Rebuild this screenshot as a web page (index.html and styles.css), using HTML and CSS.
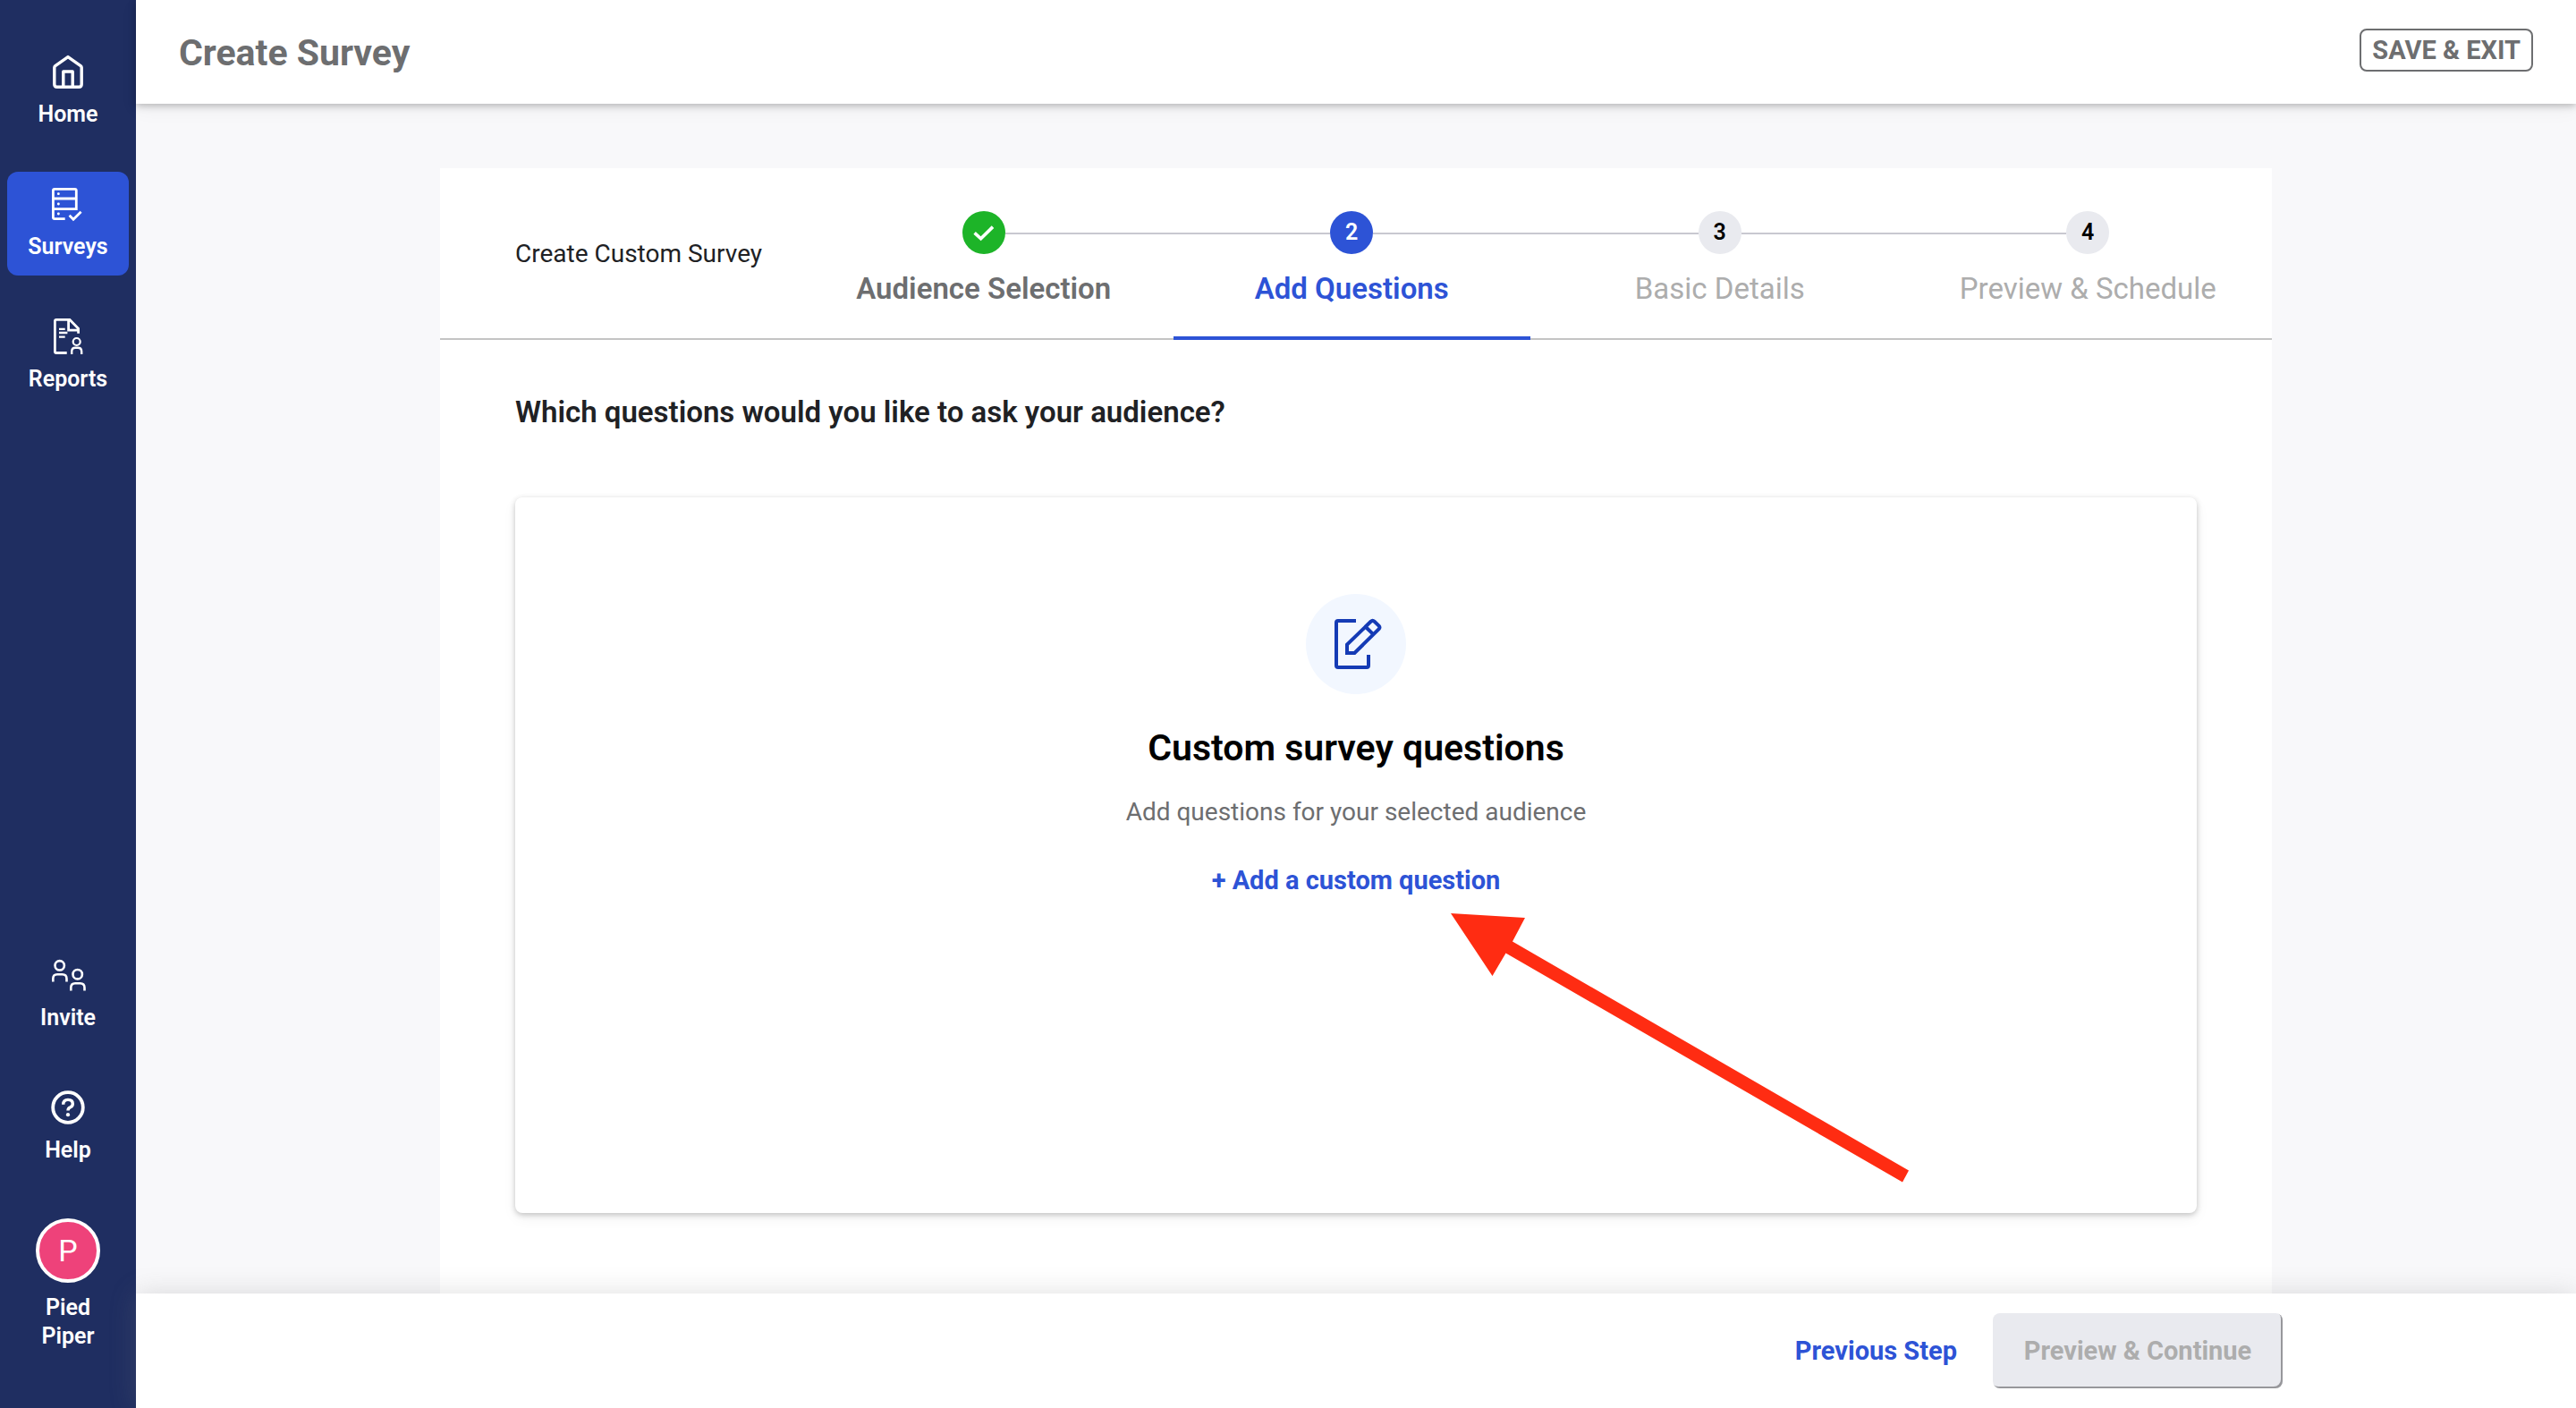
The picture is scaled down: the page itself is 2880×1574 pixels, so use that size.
FILE: index.html
```html
<!DOCTYPE html>
<html lang="en">
<head>
<meta charset="utf-8">
<meta name="viewport" content="width=device-width, initial-scale=1">
<title>Create Survey</title>
<link rel="stylesheet" href="styles.css">
</head>
<body>
<div class="app">
  <nav class="sidebar" aria-label="Main">
    <div class="nav-group">
      <a class="nav-item" href="#home">
        <svg class="nav-icon" viewBox="0 0 48 48" stroke-width="3.4" stroke-linejoin="round" aria-hidden="true"><path d="M24 7.6 38.2 17.6Q39.2 18.4 39.2 19.6V38.2Q39.2 41.2 36.2 41.2H11.8Q8.8 41.2 8.8 38.2V19.6Q8.8 18.4 9.8 17.6Z"/><path d="M18.8 41V24H29.2V41"/></svg>
        <span>Home</span>
      </a>
      <a class="nav-item nav-item-active" href="#surveys" aria-current="page">
        <svg class="nav-icon" viewBox="0 0 48 48" stroke-width="2.8" aria-hidden="true"><path d="M20.7 40.6H9Q7.4 40.6 7.4 39V9Q7.4 7.4 9 7.4H31.7Q33.3 7.4 33.3 9V29.7H7.4M7.4 18H33.3M25.6 36.8 30 41.2 38.6 32.8"/><path stroke-linecap="round" d="M13.3 12.7h.1M13.3 24h.1M13.3 35h.1"/></svg>
        <span>Surveys</span>
      </a>
      <a class="nav-item" href="#reports">
        <svg class="nav-icon" viewBox="0 0 48 48" stroke-width="2.8" aria-hidden="true"><path d="M22.7 42.5H11Q9.4 42.5 9.4 41V7Q9.4 5.4 11 5.4H26L35.6 15.2V20.8M24.6 5.4V17.1H35.6"/><path stroke-width="2.3" d="M14 15.8H20.7M14 20H23.4M14 24.6H20.7"/><circle cx="33.7" cy="30" r="4" stroke-width="2.2"/><path stroke-width="2.4" d="M28.2 44V41Q28.2 36.8 32.2 36.8H35Q39.2 36.8 39.2 41V44"/></svg>
        <span>Reports</span>
      </a>
    </div>
    <div class="nav-group">
      <a class="nav-item" href="#invite">
        <svg class="nav-icon" viewBox="0 0 48 48" stroke-width="2.6" aria-hidden="true"><circle cx="14.7" cy="13.3" r="5.2"/><path d="M7.3 31.6V28Q7.3 23.3 12 23.3H17.6Q22.5 23.3 22.5 28V31.6"/><circle cx="34.7" cy="23.2" r="5.2"/><path d="M27.3 41.6V38Q27.3 33.2 32 33.2H37.6Q42.5 33.2 42.5 38V41.6"/></svg>
        <span>Invite</span>
      </a>
      <a class="nav-item" href="#help">
        <svg class="nav-icon" viewBox="0 0 48 48" stroke-width="3.8" aria-hidden="true"><circle cx="24" cy="24" r="16.8"/><path stroke-width="3.4" d="M18.7 20.8Q18.7 15.4 24 15.4 29.3 15.4 29.3 20 29.3 22.6 26.6 23.8 24 24.8 24 27.6"/><circle class="dot" cx="24" cy="32.2" r="2.1"/></svg>
        <span>Help</span>
      </a>
      <a class="account" href="#account">
        <span class="avatar" aria-hidden="true">P</span>
        <span>Pied Piper</span>
      </a>
    </div>
  </nav>

  <div class="page">
    <header class="topbar">
      <h1 class="topbar-title">Create Survey</h1>
      <button class="save-button" type="button">SAVE &amp; EXIT</button>
    </header>

    <main class="content">
      <div class="panel">
        <div class="panel-head">
          <p class="survey-type">Create Custom Survey</p>
          <ol class="steps">
            <li class="step step-done">
              <div class="step-track"><span class="step-dot"><svg viewBox="0 0 48 48" aria-label="Done"><path d="M13.6 24.4 20.6 30.8 34 17.6"/></svg></span></div>
              <span class="step-label">Audience Selection</span>
            </li>
            <li class="step step-active" aria-current="step">
              <div class="step-track"><span class="step-dot">2</span></div>
              <span class="step-label">Add Questions</span>
            </li>
            <li class="step">
              <div class="step-track"><span class="step-dot">3</span></div>
              <span class="step-label">Basic Details</span>
            </li>
            <li class="step">
              <div class="step-track"><span class="step-dot">4</span></div>
              <span class="step-label">Preview &amp; Schedule</span>
            </li>
          </ol>
        </div>
        <section class="panel-body">
          <h2 class="question">Which questions would you like to ask your audience?</h2>
          <div class="card">
            <svg class="card-icon" viewBox="0 0 112 112" aria-hidden="true"><circle cx="56" cy="56" r="56"/><path d="M56 30H36Q34 30 34 32V80Q34 82 36 82H68Q70 82 70 80V68"/><path d="M46 66V56.6L72.6 30.8Q74.6 29 76.6 30.8L81.6 35.6Q83.2 37.4 81.6 39.2L54.4 66ZM67 37 75.6 45.4"/></svg>
            <h3 class="card-title">Custom survey questions</h3>
            <p class="card-text">Add questions for your selected audience</p>
            <button class="link-button" type="button">+ Add a custom question</button>
            <svg class="pointer" viewBox="0 0 514 302" aria-hidden="true"><path d="M0 0 83 5 69 31.5 512 287.5 505 300.5 61.5 44.5 46.5 70Z"/></svg>
          </div>
        </section>
      </div>
    </main>

    <footer class="footer">
      <div class="footer-actions">
        <button class="link-button" type="button">Previous Step</button>
        <button class="next-button" type="button" disabled>Preview &amp; Continue</button>
      </div>
    </footer>
  </div>
</div>
</body>
</html>
```
FILE: styles.css
```css
* {
  box-sizing: border-box;
}

body {
  margin: 0;
  background: #f8f8fa;
  color: #202124;
  font-family: Roboto, "Liberation Sans", sans-serif;
  font-size: 28px;
  line-height: 40px;
}

h1, h2, h3, p, ol {
  margin: 0;
  padding: 0;
}

button {
  font: inherit;
  font-size: 29px;
  font-weight: 700;
  cursor: pointer;
}

.app {
  display: flex;
  min-height: 100vh;
}

/* Sidebar */
.sidebar {
  position: sticky;
  top: 0;
  display: flex;
  flex: 0 0 152px;
  flex-direction: column;
  justify-content: space-between;
  height: 100vh;
  padding: 44px 8px;
  background: #1f2e61;
  font-size: 25px;
  font-weight: 600;
  line-height: 32px;
  text-align: center;
}

.nav-group {
  display: flex;
  flex-direction: column;
  gap: 32px;
}

.nav-item,
.account {
  display: flex;
  flex-direction: column;
  align-items: center;
  gap: 8px;
  color: #fff;
  text-decoration: none;
}

.nav-item {
  padding: 12px 0 16px;
  border-radius: 12px;
}

.nav-item-active {
  background: #2d53d6;
}

.nav-icon {
  width: 48px;
  height: 48px;
  fill: none;
  stroke: #fff;
}

.nav-icon .dot {
  fill: #fff;
  stroke: none;
}

.account {
  gap: 12px;
  padding: 12px 24px 20px;
}

.avatar {
  width: 72px;
  height: 72px;
  border: 4px solid #fff;
  border-radius: 50%;
  background: #ee427a;
  font-size: 34px;
  font-weight: 400;
  line-height: 64px;
}

/* Page frame */
.page {
  display: flex;
  flex: 1;
  flex-direction: column;
  min-width: 0;
}

.topbar {
  position: relative;
  display: flex;
  align-items: flex-start;
  justify-content: space-between;
  padding: 32px 48px 30px;
  background: #fff;
  box-shadow: 0 2px 8px rgba(0, 0, 0, 0.26), 0 6px 20px rgba(0, 0, 0, 0.05);
}

.topbar-title {
  color: #6d6e70;
  font-size: 41px;
  line-height: 54px;
}

.save-button {
  height: 48px;
  padding: 0 12px;
  border: 2px solid #6d6e70;
  border-radius: 8px;
  background: #fff;
  color: #6d6e70;
  line-height: 44px;
}

.content {
  display: flex;
  flex: 1;
  justify-content: center;
  padding: 72px 48px 0;
}

.panel {
  flex: 0 1 2048px;
  background: #fff;
}

/* Steps */
.panel-head {
  display: flex;
  align-items: center;
  border-bottom: 2px solid #c4c4c4;
}

.survey-type {
  flex: 0 0 402px;
  padding: 2px 0 0 84px;
  white-space: nowrap;
}

.steps {
  display: grid;
  flex: 1;
  grid-template-columns: repeat(4, 1fr);
  margin-bottom: -2px;
  list-style: none;
}

.step {
  display: flex;
  flex-direction: column;
  padding-top: 48px;
  color: #adadad;
  font-size: 33px;
  text-align: center;
}

.step::after {
  height: 4px;
  margin: 33px 6px 0;
  content: "";
}

.step-track {
  display: flex;
  align-items: center;
  margin-bottom: 19px;
}

.step-track::before,
.step-track::after {
  flex: 1;
  height: 2px;
  margin-top: 2px;
  background: #c8c8d0;
  content: "";
}

.step:first-child .step-track::before,
.step:last-child .step-track::after {
  visibility: hidden;
}

.step-dot {
  width: 48px;
  height: 48px;
  border-radius: 50%;
  background: #e9eaef;
  color: #000;
  font-size: 25px;
  font-weight: 600;
  line-height: 48px;
}

.step-dot svg {
  display: block;
  fill: none;
  stroke: #fff;
  stroke-width: 3.6;
}

.step-done {
  color: #6d6e70;
  font-weight: 600;
}

.step-done .step-dot {
  background: #1db428;
}

.step-active {
  color: #2d53d6;
  font-weight: 600;
}

.step-active .step-dot {
  background: #2d53d6;
  color: #fff;
}

.step-active::after {
  background: #2d53d6;
}

/* Panel body */
.panel-body {
  padding: 61px 84px 90px;
}

.question {
  margin-bottom: 75px;
  font-size: 33px;
  font-weight: 600;
}

.card {
  position: relative;
  display: flex;
  flex-direction: column;
  align-items: center;
  min-height: 800px;
  padding: 108px 24px;
  border-radius: 8px;
  background: #fff;
  box-shadow: 0 2px 6px rgba(0, 0, 0, 0.22), 0 6px 16px rgba(0, 0, 0, 0.05);
}

.card-icon {
  width: 112px;
  height: 112px;
  margin-bottom: 36px;
  fill: none;
  stroke: #153bb5;
  stroke-width: 4;
}

.card-icon circle {
  fill: #f2f7ff;
  stroke: none;
}

.card-title {
  margin-bottom: 28px;
  color: #000;
  font-size: 41px;
  font-weight: 600;
  line-height: 48px;
}

.card-text {
  margin-bottom: 36px;
  color: #6d6e70;
}

.link-button {
  padding: 0;
  border: 0;
  background: none;
  color: #2d53d6;
}

.pointer {
  position: absolute;
  top: 465px;
  left: calc(50% + 106px);
  width: 514px;
  height: 302px;
  fill: #ff2c12;
  pointer-events: none;
}

/* Footer */
.footer {
  position: sticky;
  bottom: 0;
  padding: 22px 48px;
  background: #fff;
  box-shadow: 0 0 28px rgba(120, 120, 120, 0.24);
}

.footer-actions {
  display: flex;
  justify-content: flex-end;
  gap: 40px;
  max-width: 2072px;
  margin: 0 auto;
}

.next-button {
  min-width: 324px;
  height: 84px;
  padding: 0 32px;
  border: 0;
  border-radius: 8px;
  background: #e9eaef;
  box-shadow: inset -2px -2px 0 #97979b;
  color: #adadad;
  cursor: default;
}
```
